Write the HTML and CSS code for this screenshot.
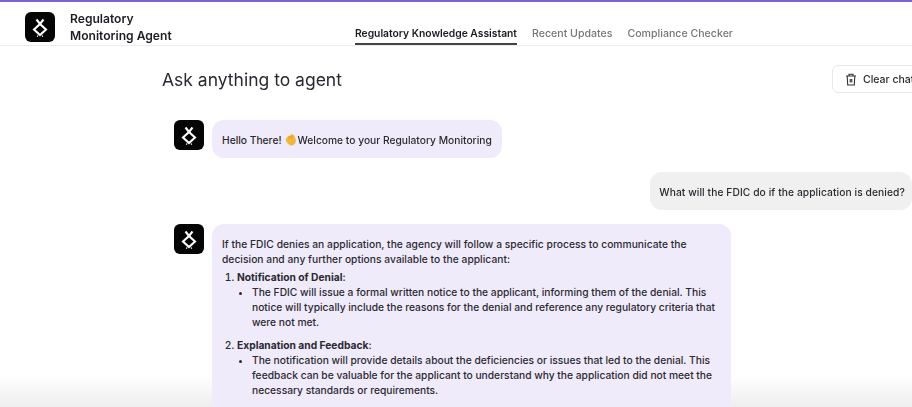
FILE: index.html
```html
<!DOCTYPE html>
<html lang="en">
<head>
<meta charset="utf-8">
<title>Regulatory Monitoring Agent</title>
<link rel="stylesheet" href="styles.css">
</head>
<body>
<svg class="defs" width="0" height="0" aria-hidden="true">
  <symbol id="logo" viewBox="0 0 30 30">
    <rect width="30" height="30" rx="6" fill="#050505"/>
    <path d="M11.5 7.5 L15 12 L21 17.5 L15 23 L9 17.5 L15 12 L18.5 7.5" fill="none" stroke="#fff" stroke-width="2.1"/>
    <path d="M13 23.5 L12.2 24.6 M17 23.5 L17.8 24.6" fill="none" stroke="#fff" stroke-width="1.2"/>
  </symbol>
</svg>
<div class="fade"></div>
<header class="topbar">
  <div class="brand">
    <svg class="avatar"><use href="#logo"/></svg>
    <div class="brand-name">Regulatory<br>Monitoring Agent</div>
  </div>
  <nav class="tabs">
    <a class="tab active">Regulatory Knowledge Assistant</a>
    <a class="tab">Recent Updates</a>
    <a class="tab">Compliance Checker</a>
  </nav>
</header>
<main class="page">
  <div class="title-row">
    <h1>Ask anything to agent</h1>
    <button class="clear">
      <svg width="12" height="13" viewBox="0 0 12 13" fill="none" stroke="#333" stroke-width="1.1"><path d="M1 3h10M4 3V1.2h4V3M2.2 3l.5 9h6.6l.5-9"/><rect x="4.6" y="6" width="2.8" height="3.4" fill="#555" stroke="none"/></svg>
      Clear chat
    </button>
  </div>
  <section class="chat">
    <div class="msg">
      <svg class="avatar"><use href="#logo"/></svg>
      <div class="bubble bot short">Hello There!<svg class="wave" width="13" height="13" viewBox="0 0 13 13"><path d="M1.5 6.5 L4.5 2.5 L6 3 L7.3 1 L9 1.8 L10.2 2.5 L12 7 C12 10.5 9.5 12.8 6.8 12.4 C4.5 12 2.8 9.5 1.5 6.5Z" fill="#f2b63c"/><path d="M4.5 5.5 L6.3 3.2 M6.5 6 L8.5 2.8" stroke="#d18f1e" stroke-width=".7"/></svg>Welcome to your Regulatory Monitoring</div>
    </div>
    <div class="msg user">
      <div class="bubble human short">What will the FDIC do if the application is denied?</div>
    </div>
    <div class="msg">
      <svg class="avatar"><use href="#logo"/></svg>
      <div class="bubble bot long">
        <p>If the FDIC denies an application, the agency will follow a specific process to communicate the decision and any further options available to the applicant:</p>
        <ol>
          <li><strong>Notification of Denial</strong>:
            <ul><li>The FDIC will issue a formal written notice to the applicant, informing them of the denial. This notice will typically include the reasons for the denial and reference any regulatory criteria that were not met.</li></ul>
          </li>
          <li><strong>Explanation and Feedback</strong>:
            <ul><li>The notification will provide details about the deficiencies or issues that led to the denial. This feedback can be valuable for the applicant to understand why the application did not meet the necessary standards or requirements.</li></ul>
          </li>
        </ol>
      </div>
    </div>
  </section>
</main>
</body>
</html>
```
FILE: styles.css
```css
* { box-sizing: border-box; }
html, body { margin: 0; height: 100%; overflow: hidden; }
body {
  background: #fff;
  color: #2b2931;
  font-family: "Inter", "Liberation Sans", sans-serif;
  font-size: 10.25px;
  border-top: 2px solid #7c62d0;
  width: 912px;
  height: 407px;
  position: relative;
  filter: blur(.35px);
}
.defs { position: absolute; }
.avatar { width: 30px; height: 30px; flex: none; display: block; }
.topbar {
  height: 44px;
  display: flex;
  border-bottom: 1px solid #ececec;
  padding-left: 25px;
  position: relative;
}
.brand { display: flex; align-items: flex-start; gap: 15px; width: 330px; padding-top: 10px; }
.brand-name { font-size: 12.1px; font-weight: 600; line-height: 17px; margin-top: -2px; color: #1f1d24; }
.tabs { display: flex; gap: 15px; align-items: flex-end; }
.tab {
  height: 43px;
  padding: 25px 0 0;
  font-size: 10.6px;
  font-weight: 500;
  color: #77757c;
  border-bottom: 2px solid transparent;
}
.tab.active { color: #1d1b22; font-size: 10.3px; font-weight: 600; border-bottom-color: #444; }
.page { padding: 19px 0 0 162px; position: relative; }
.title-row { display: flex; justify-content: space-between; align-items: center; height: 28px; margin-right: -20px; margin-bottom: 1px; }
h1 { margin: 0; font-size: 17.5px; font-weight: 400; color: #2a2830; }
.clear {
  width: 100px;
  height: 28px;
  background: #fff;
  border: 1px solid #e8e8e8;
  border-radius: 6px;
  display: flex;
  align-items: center;
  justify-content: flex-start;
  gap: 6px;
  padding: 0 0 0 12px;
  font: 500 10.5px "Inter", "Liberation Sans", sans-serif;
  color: #2a2830;
}
.chat { display: flex; flex-direction: column; gap: 14px; padding: 26px 0 0 12px; }
.msg { display: flex; gap: 8px; align-items: flex-start; }
.msg.user { justify-content: flex-end; }
.bubble { border-radius: 12px; line-height: 15px; font-weight: 500; }
.bot { background: #efebfa; }
.human { background: #f0f0f0; letter-spacing: .08px; }
.short { padding: 13px 10px 10px; white-space: nowrap; }
.human { padding-left: 9px; padding-right: 7px; }
.wave { vertical-align: -2px; margin: 0 1px 0 2px; }
.long { width: 519px; padding: 13px 15px 0 10px; height: 183px; border-radius: 12px 12px 0 0; }
.long p { margin: 0; letter-spacing: .03px; }
ol { margin: 3px 0 0; padding: 0 0 0 15px; }
ol > li { margin-bottom: 8px; }
ul { margin: 0; padding: 0 0 0 15px; list-style: disc; }
strong { font-weight: 700; }
.fade {
  position: absolute;
  left: 0; right: 0; bottom: 0;
  height: 32px;
  background: linear-gradient(to bottom, rgba(236,236,236,0), rgba(236,236,236,.9));
}
```
